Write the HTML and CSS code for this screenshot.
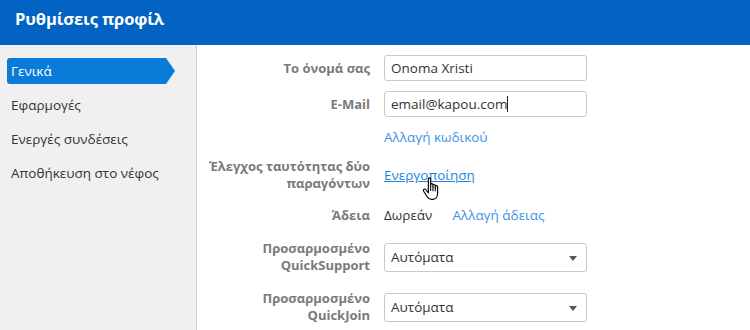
FILE: index.html
```html
<!DOCTYPE html>
<html lang="el">
<head>
<meta charset="utf-8">
<title>Ρυθμίσεις προφίλ</title>
<link rel="stylesheet" href="styles.css">
</head>
<body>
<header class="topbar"><h1 class="title">Ρυθμίσεις προφίλ</h1></header>
<div class="layout">
  <nav class="sidebar">
    <a class="nav-item active">Γενικά</a>
    <a class="nav-item">Εφαρμογές</a>
    <a class="nav-item">Ενεργές συνδέσεις</a>
    <a class="nav-item">Αποθήκευση στο νέφος</a>
  </nav>
  <main class="main">
    <div class="row r1">
      <div class="lbl">Το όνομά σας</div>
      <div class="input">Onoma Xristi</div>
    </div>
    <div class="row r2">
      <div class="lbl">E-Mail</div>
      <div class="input">email@kapou.com<span class="caret"></span></div>
    </div>
    <div class="row r3">
      <div class="lbl"></div>
      <a class="link">Αλλαγή κωδικού</a>
    </div>
    <div class="row r4">
      <div class="lbl">Έλεγχος ταυτότητας δύο παραγόντων</div>
      <div class="hover-wrap">
        <a class="link under">Ενεργοποίηση</a>
        <svg class="cursor" width="19" height="24" viewBox="0 0 18 23"><path d="M6 2.2c0-.9.5-1.4 1.1-1.4s1.1.5 1.1 1.4V9V7.6c0-.8.5-1.2 1.1-1.2s1.1.4 1.1 1.2V9.6V8.4c0-.8.5-1.2 1.1-1.2s1.1.4 1.1 1.2V10.2V9.4c0-.8.5-1.2 1.1-1.2s1.1.4 1.1 1.2V16c0 3.2-2 5.5-4.8 5.5H9c-2.1 0-3.2-1-4.2-2.6L1.5 13.6c-.5-.8-.3-1.6.3-1.9s1.4-.2 1.9.5L6 15.2Z" fill="#fff" stroke="#000" stroke-width="1.1" stroke-linejoin="round"/><path d="M8.2 9v4.5M10.4 9.6v4M12.6 10.2v3.5" stroke="#000" stroke-width="1"/></svg>
      </div>
    </div>
    <div class="row r5">
      <div class="lbl">Άδεια</div>
      <span class="value">Δωρεάν</span>
      <a class="link license">Αλλαγή άδειας</a>
    </div>
    <div class="row r6">
      <div class="lbl">Προσαρμοσμένο QuickSupport</div>
      <div class="select">Αυτόματα<span class="arrow"></span></div>
    </div>
    <div class="row r7">
      <div class="lbl">Προσαρμοσμένο QuickJoin</div>
      <div class="select">Αυτόματα<span class="arrow"></span></div>
    </div>
  </main>
</div>
</body>
</html>
```
FILE: styles.css
```css
* { box-sizing: border-box; }
html, body { margin: 0; padding: 0; }
body {
  width: 750px;
  height: 330px;
  overflow: hidden;
  font-family: "Open Sans", "Noto Sans", sans-serif;
  font-size: 13.5px;
  color: #333;
  background: #fff;
}
.topbar {
  height: 45px;
  background: #0363c3;
  display: flex;
  align-items: center;
  padding-left: 15px;
}
.title {
  margin: 0;
  color: #fff;
  font-size: 16.5px;
  font-weight: 700;
  letter-spacing: -0.1px;
  padding-bottom: 9px;
}
.layout {
  display: flex;
  height: 285px;
}
.sidebar {
  width: 197px;
  flex: none;
  background: #f0f0f0;
  border-right: 1px solid #cfcfcf;
  padding: 13px 0 0 7px;
  display: flex;
  flex-direction: column;
  gap: 8px;
}
.nav-item {
  height: 26px;
  display: flex;
  align-items: center;
  padding-left: 4px;
  color: #333;
  width: 168px;
}
.nav-item.active {
  background: #0a7bd9;
  color: #fff;
  border-radius: 3px;
  clip-path: polygon(0 0, calc(100% - 9px) 0, 100% 50%, calc(100% - 9px) 100%, 0 100%);
}
.main {
  flex: 1;
  padding: 10px 0 0 8px;
}
.row {
  display: flex;
  align-items: center;
}
.lbl {
  width: 165px;
  flex: none;
  margin-right: 14px;
  text-align: right;
  font-size: 13px;
  font-weight: 700;
  color: #7a7a7a;
  line-height: 17px;
}
.input, .select {
  width: 203px;
  border: 1px solid #c8c8c8;
  border-radius: 3px;
  padding: 0 6px;
  display: flex;
  align-items: center;
  color: #333;
}
.input { height: 26px; }
.select { height: 29px; position: relative; }
.caret {
  display: inline-block;
  width: 1px;
  height: 16px;
  background: #222;
}
.arrow {
  position: absolute;
  right: 9px;
  top: 12px;
  border-left: 4px solid transparent;
  border-right: 4px solid transparent;
  border-top: 5px solid #555;
}
.link {
  color: #3d93e6;
  line-height: 18px;
  text-decoration: none;
}
.link.under {
  color: #1d85e0;
  text-decoration: underline;
}
.hover-wrap { position: relative; }
.cursor {
  position: absolute;
  left: 38px;
  top: 11px;
}
.value { line-height: 18px; color: #333; }
.license { margin-left: 20px; }
.r2 { margin-top: 10px; }
.r3 { margin-top: 11px; }
.r4 { margin-top: 12px; }
.r5 { margin-top: 14px; }
.r6 { margin-top: 16px; }
.r7 { margin-top: 16px; }
```
